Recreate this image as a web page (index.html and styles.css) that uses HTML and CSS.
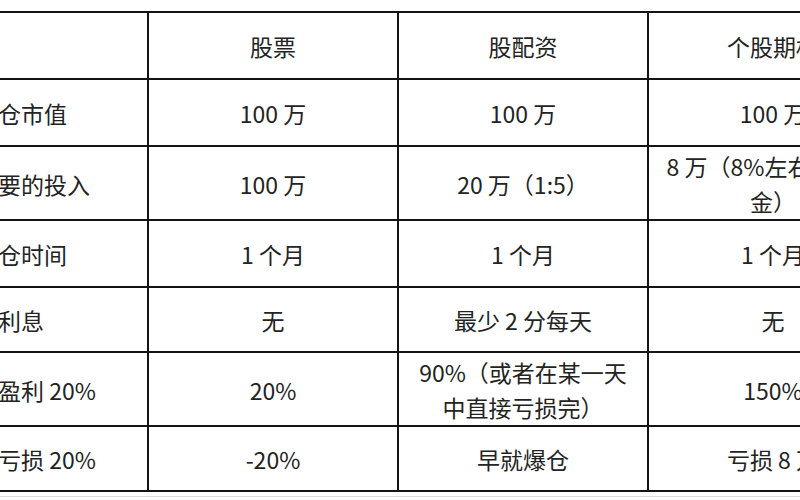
FILE: index.html
```html
<!DOCTYPE html>
<html lang="zh-CN">
<head>
<meta charset="utf-8">
<title>股票 / 股配资 / 个股期权 对比</title>
<link rel="stylesheet" href="styles.css">
</head>
<body>
<div class="sheet">
  <div class="grid">
    <div class="cell first r1"></div>
    <div class="cell r1">股票</div>
    <div class="cell r1">股配资</div>
    <div class="cell r1">个股期权</div>

    <div class="cell first r2">仓市值</div>
    <div class="cell r2">100 万</div>
    <div class="cell r2">100 万</div>
    <div class="cell r2">100 万</div>

    <div class="cell first r3">要的投入</div>
    <div class="cell r3">100 万</div>
    <div class="cell r3">20 万（1:5）</div>
    <div class="cell r3">8 万（8%左右的权利<br>金）</div>

    <div class="cell first r4">仓时间</div>
    <div class="cell r4">1 个月</div>
    <div class="cell r4">1 个月</div>
    <div class="cell r4">1 个月</div>

    <div class="cell first r5">利息</div>
    <div class="cell r5">无</div>
    <div class="cell r5">最少 2 分每天</div>
    <div class="cell r5">无</div>

    <div class="cell first r6">盈利 20%</div>
    <div class="cell r6">20%</div>
    <div class="cell r6">90%（或者在某一天<br>中直接亏损完）</div>
    <div class="cell r6">150%</div>

    <div class="cell first r7">亏损 20%</div>
    <div class="cell r7">-20%</div>
    <div class="cell r7">早就爆仓</div>
    <div class="cell r7">亏损 8 万</div>
  </div>
  <div class="edge"></div>
</div>
</body>
</html>
```

FILE: styles.css
```css
html, body {
  margin: 0;
  padding: 0;
  background: #ffffff;
  overflow: hidden;
  width: 800px;
  height: 500px;
}

.sheet {
  width: 800px;
  height: 500px;
  overflow: hidden;
  padding-top: 11px;
  box-sizing: border-box;
}

.grid {
  display: grid;
  grid-template-columns: 149px 250px 250px 250px;
  grid-template-rows: 67px 67px 74px 67px 65px 74px 65px;
  width: 901px;
  margin-left: -2px;
  border-top: 2px solid #141414;
  border-left: 2px solid #141414;
  font-family: "Noto Sans CJK SC", "Microsoft YaHei", sans-serif;
  font-size: 23px;
  line-height: 35px;
  color: #232323;
}

.cell {
  border-right: 2px solid #141414;
  border-bottom: 2px solid #141414;
  display: flex;
  align-items: center;
  justify-content: center;
  text-align: center;
  white-space: nowrap;
  padding-top: 2px;
  box-sizing: border-box;
}

.cell.first {
  justify-content: flex-start;
  text-align: left;
  padding-left: 0;
  text-indent: -2px;
}

.edge {
  margin-top: 4px;
  height: 1px;
  background: #dcdcdc;
}
```
